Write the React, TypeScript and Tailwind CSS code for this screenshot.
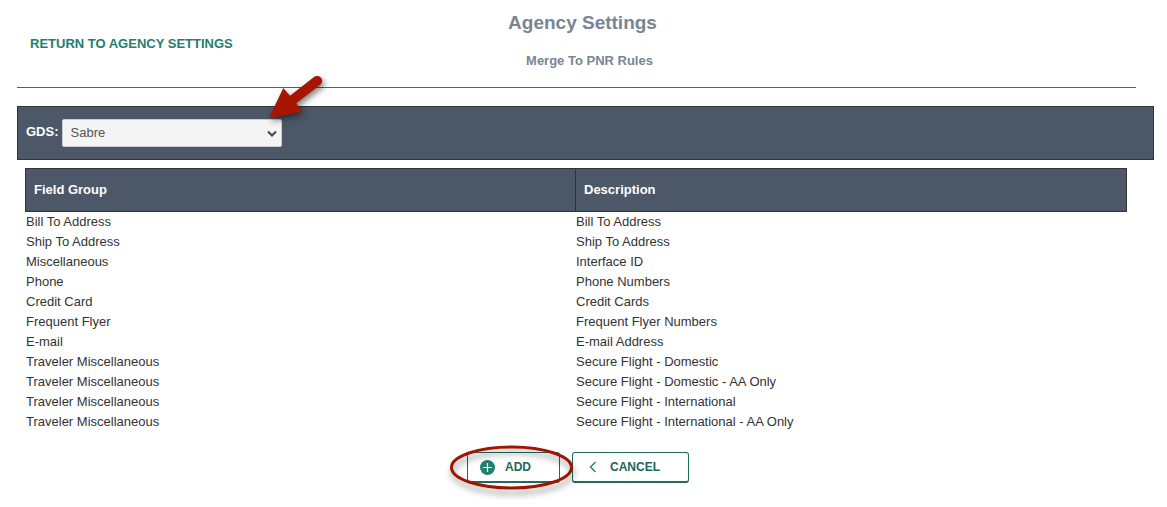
const rules = [
  ["Bill To Address", "Bill To Address"],
  ["Ship To Address", "Ship To Address"],
  ["Miscellaneous", "Interface ID"],
  ["Phone", "Phone Numbers"],
  ["Credit Card", "Credit Cards"],
  ["Frequent Flyer", "Frequent Flyer Numbers"],
  ["E-mail", "E-mail Address"],
  ["Traveler Miscellaneous", "Secure Flight - Domestic"],
  ["Traveler Miscellaneous", "Secure Flight - Domestic - AA Only"],
  ["Traveler Miscellaneous", "Secure Flight - International"],
  ["Traveler Miscellaneous", "Secure Flight - International - AA Only"],
];

function Header() {
  return (
    <header className="mr-[18px] grid grid-cols-[1fr_auto_1fr] border-b border-[#336699] pb-4 font-bold">
      <a href="#agency" className="ml-[13px] mt-[34px] justify-self-start text-[13px] leading-5 text-[#22806d]">
        RETURN TO AGENCY SETTINGS
      </a>
      <div className="pl-3 text-center text-[#788594]">
        <h1 className="mt-[10px] text-[19px] leading-[26px]">Agency Settings</h1>
        <h2 className="mt-[15px] pl-[14px] text-[13px] leading-5">Merge To PNR Rules</h2>
      </div>
    </header>
  );
}

function GdsBar() {
  return (
    <div className="mt-[18px] flex h-[54px] items-center gap-[3px] border border-[#333333] bg-[#4c5867] px-2">
      <label htmlFor="gds" className="pb-[2px] text-[13px] font-bold text-white">GDS:</label>
      <div className="relative">
        <select
          id="gds"
          defaultValue="Sabre"
          className="block h-7 w-[220px] appearance-none rounded-xs border border-[#cccccc] bg-[#f4f4f4] px-2 text-[13px] text-[#555555]"
        >
          <option>Sabre</option>
        </select>
        <svg className="pointer-events-none absolute right-1 top-[11px]" width="12" height="8" viewBox="0 0 12 8" fill="none" stroke="#444" strokeWidth="2">
          <path d="M2 1.5 6 5.5 10 1.5" />
        </svg>
        <svg className="pointer-events-none absolute -right-[46px] -top-[49px] overflow-visible drop-shadow-[2px_3px_3px_rgba(0,0,0,0.5)]" width="60" height="50" viewBox="0 0 60 50">
          <path
            d="M1 48 15.3 18 22 25.7 46 7A5 5 0 0 1 52.3 14.8L28.3 33.3 34 41.7Z"
            fill="#a81500"
          />
        </svg>
      </div>
    </div>
  );
}

function RulesTable() {
  return (
    <table className="ml-2 mt-2 w-[calc(100%-35px)] table-fixed border-separate border-spacing-0 text-left text-[13px] leading-5 text-[#333333]">
      <thead>
        <tr className="h-11 bg-[#4c5867] text-white">
          <th className="border border-[#333333] px-2 font-bold">Field Group</th>
          <th className="border border-l-0 border-[#333333] px-2 font-bold">Description</th>
        </tr>
      </thead>
      <tbody>
        {rules.map(([group, description]) => (
          <tr key={description}>
            <td className="pl-px">{group}</td>
            <td>{description}</td>
          </tr>
        ))}
      </tbody>
    </table>
  );
}

function Actions() {
  const button =
    "flex h-[31px] items-center rounded-[3px] border border-b-2 border-[#1f6b5d] bg-white text-[12px] font-bold text-[#22665a]";
  return (
    <div className="mt-5 flex justify-center gap-3 pr-[15px]">
      <div className="relative">
        <button type="button" className={`${button} w-[93px] gap-[10px] pl-3`}>
          <svg width="15" height="15" viewBox="0 0 15 15">
            <circle cx="7.5" cy="7.5" r="7.5" fill="#22806d" />
            <path d="M7.5 3v9M3 7.5h9" stroke="white" strokeWidth="1.2" />
          </svg>
          ADD
        </button>
        <svg className="pointer-events-none absolute -left-[18px] -top-[7px] overflow-visible drop-shadow-[1px_5px_3px_rgba(0,0,0,0.4)]" width="124" height="44" viewBox="0 0 124 44">
          <ellipse cx="62.5" cy="22.5" rx="60" ry="20.5" fill="none" stroke="#a01500" strokeWidth="3" />
        </svg>
      </div>
      <button type="button" className={`${button} w-[117px] gap-[13px] pl-4`}>
        <svg width="8" height="12" viewBox="0 0 8 12" fill="none" stroke="#22806d" strokeWidth="1.4">
          <path d="M6.5 1 1.5 6 6.5 11" />
        </svg>
        CANCEL
      </button>
    </div>
  );
}

export default function App() {
  return (
    <main className="bg-white pb-6 pl-[17px] pr-[13px] font-['Liberation_Sans',Arial,sans-serif]">
      <Header />
      <GdsBar />
      <RulesTable />
      <Actions />
    </main>
  );
}
